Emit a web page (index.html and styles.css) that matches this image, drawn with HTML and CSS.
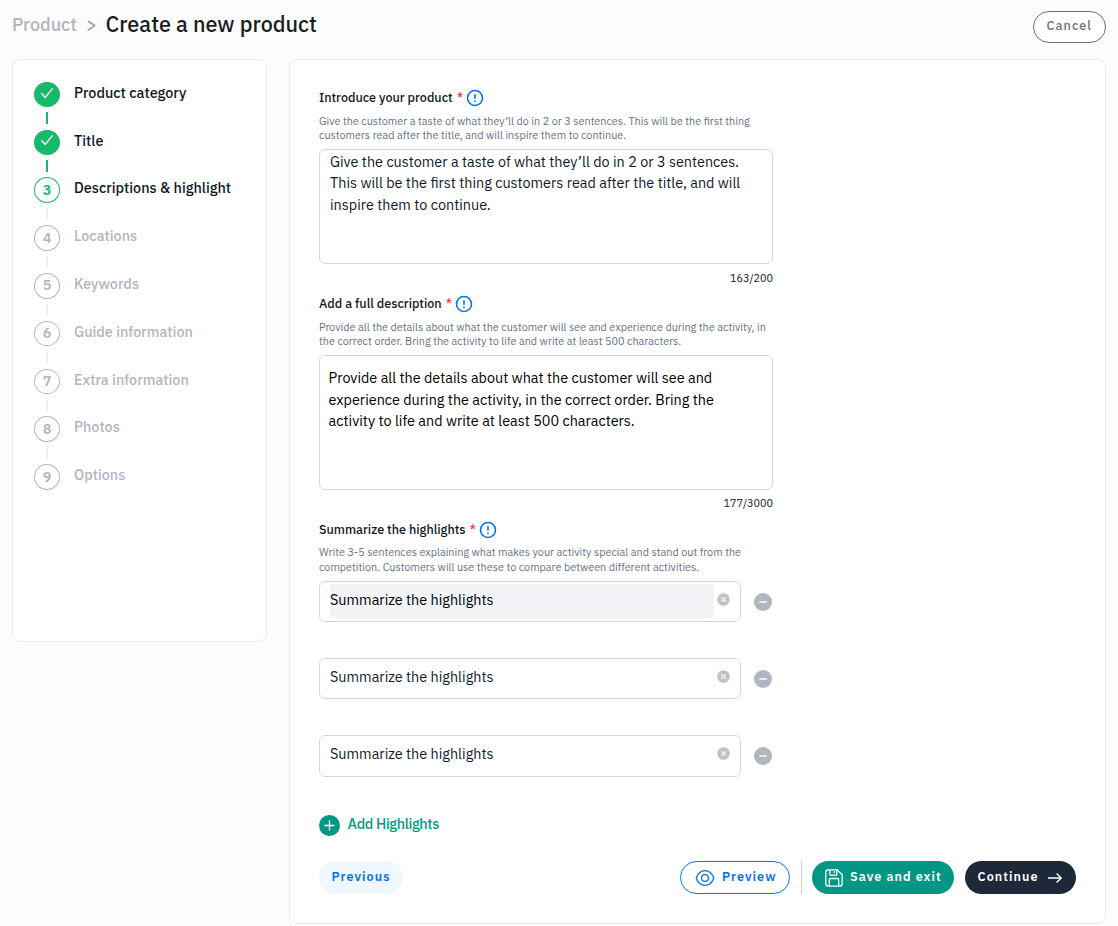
FILE: index.html
```html
<!DOCTYPE html>
<html lang="en">
<head>
<meta charset="utf-8">
<title>Create a new product</title>
<link rel="stylesheet" href="styles.css">
</head>
<body>
<header class="header">
  <nav class="crumbs"><span class="crumb">Product</span><span class="sep">&gt;</span><h1 class="title">Create a new product</h1></nav>
  <button class="btn cancel">Cancel</button>
</header>
<div class="layout">
  <aside class="card sidebar">
    <ol class="steps">
      <li class="step done"><span class="dot"><svg width="14" height="14" viewBox="0 0 14 14"><path d="M1.4 7.2 5.2 11.4 12.8 2.2"/></svg></span><span class="name">Product category</span></li>
      <li class="step done"><span class="dot"><svg width="14" height="14" viewBox="0 0 14 14"><path d="M1.4 7.2 5.2 11.4 12.8 2.2"/></svg></span><span class="name">Title</span></li>
      <li class="step current"><span class="dot">3</span><span class="name">Descriptions &amp; highlight</span></li>
      <li class="step"><span class="dot">4</span><span class="name">Locations</span></li>
      <li class="step"><span class="dot">5</span><span class="name">Keywords</span></li>
      <li class="step"><span class="dot">6</span><span class="name">Guide information</span></li>
      <li class="step"><span class="dot">7</span><span class="name">Extra information</span></li>
      <li class="step"><span class="dot">8</span><span class="name">Photos</span></li>
      <li class="step"><span class="dot">9</span><span class="name">Options</span></li>
    </ol>
  </aside>
  <main class="card form">
    <section class="field">
      <div class="label"><span class="label-text">Introduce your product</span><span class="star">*</span><svg class="info" width="18" height="18" viewBox="0 0 18 18"><circle cx="9" cy="9" r="7.5"/><path d="M9 5.2v4.6M9 11.4v1.5"/></svg></div>
      <p class="help">Give the customer a taste of what they’ll do in 2 or 3 sentences. This will be the first thing<br>customers read after the title, and will inspire them to continue.</p>
      <div class="area area-short">Give the customer a taste of what they’ll do in 2 or 3 sentences.<br>This will be the first thing customers read after the title, and will<br>inspire them to continue.</div>
      <div class="counter">163/200</div>
    </section>
    <section class="field">
      <div class="label"><span class="label-text">Add a full description</span><span class="star">*</span><svg class="info" width="18" height="18" viewBox="0 0 18 18"><circle cx="9" cy="9" r="7.5"/><path d="M9 5.2v4.6M9 11.4v1.5"/></svg></div>
      <p class="help">Provide all the details about what the customer will see and experience during the activity, in<br>the correct order. Bring the activity to life and write at least 500 characters.</p>
      <div class="area area-tall">Provide all the details about what the customer will see and<br>experience during the activity, in the correct order. Bring the<br>activity to life and write at least 500 characters.</div>
      <div class="counter">177/3000</div>
    </section>
    <section class="field">
      <div class="label"><span class="label-text">Summarize the highlights</span><span class="star">*</span><svg class="info" width="18" height="18" viewBox="0 0 18 18"><circle cx="9" cy="9" r="7.5"/><path d="M9 5.2v4.6M9 11.4v1.5"/></svg></div>
      <p class="help help-high">Write 3-5 sentences explaining what makes your activity special and stand out from the<br>competition. Customers will use these to compare between different activities.</p>
      <div class="rows">
        <div class="row">
          <div class="input"><span class="value selected">Summarize the highlights</span><svg class="clear" width="13" height="13" viewBox="0 0 12 12"><circle cx="6" cy="6" r="5.8"/><path d="m4 4 4 4m0-4-4 4"/></svg></div>
          <svg class="remove" width="18" height="18" viewBox="0 0 18 18"><circle cx="9" cy="9" r="9"/><path d="M5.2 9h7.6"/></svg>
        </div>
        <div class="row">
          <div class="input"><span class="value">Summarize the highlights</span><svg class="clear" width="13" height="13" viewBox="0 0 12 12"><circle cx="6" cy="6" r="5.8"/><path d="m4 4 4 4m0-4-4 4"/></svg></div>
          <svg class="remove" width="18" height="18" viewBox="0 0 18 18"><circle cx="9" cy="9" r="9"/><path d="M5.2 9h7.6"/></svg>
        </div>
        <div class="row">
          <div class="input input-last"><span class="value">Summarize the highlights</span><svg class="clear" width="13" height="13" viewBox="0 0 12 12"><circle cx="6" cy="6" r="5.8"/><path d="m4 4 4 4m0-4-4 4"/></svg></div>
          <svg class="remove" width="18" height="18" viewBox="0 0 18 18"><circle cx="9" cy="9" r="9"/><path d="M5.2 9h7.6"/></svg>
        </div>
      </div>
    </section>
    <div class="add"><svg width="21" height="21" viewBox="0 0 21 21"><circle cx="10.5" cy="10.5" r="10.5"/><path d="M5.5 10.5h10M10.5 5.5v10"/></svg><span class="add-text">Add Highlights</span></div>
    <footer class="actions">
      <button class="btn previous">Previous</button>
      <button class="btn preview"><svg width="20" height="18" viewBox="0 0 20 18"><path d="M1.2 9C2.9 4.300 6 1.600 10 1.600S17.100 4.300 18.800 9C17.100 13.700 14 16.400 10 16.400S2.900 13.700 1.200 9Z"/><circle cx="10" cy="9" r="3.4"/></svg><span class="text">Preview</span></button>
      <span class="divider"></span>
      <button class="btn save"><svg width="18" height="18" viewBox="0 0 18 18"><path d="M3 .8h9.200L17.200 5.800V15a2.200 2.200 0 0 1-2.200 2.200H3A2.200 2.200 0 0 1 .8 15V3A2.200 2.200 0 0 1 3 .8ZM4.800 1v4.200a1 1 0 0 0 1 1h5a1 1 0 0 0 1-1V1M9.300 2.300v1.600M4.300 17V10.500a1 1 0 0 1 1-1h7.400a1 1 0 0 1 1 1V17"/></svg><span class="text">Save and exit</span></button>
      <button class="btn continue"><span class="text">Continue</span><svg width="16" height="12" viewBox="0 0 16 12"><path d="M1 6h13M9.600 1.400 14.200 6l-4.600 4.600"/></svg></button>
    </footer>
  </main>
</div>
</body>
</html>
```
FILE: styles.css
```css
* { box-sizing: border-box; }
body { margin: 0; height: 926px; overflow: hidden; background: #fcfcfc; color: #101828; font-family: "IBM Plex Sans", Roboto, "Noto Sans", sans-serif; white-space: nowrap; }
svg { flex: none; fill: none; }
.header { height: 59px; padding: 11px 12px 0; display: flex; justify-content: space-between; align-items: flex-start; }
.crumbs { display: flex; align-items: center; height: 26px; }
.crumb { width: 74px; font-size: 18px; font-weight: 500; color: #b0b5c0; }
.sep { width: 19.500px; font-size: 18px; font-weight: 500; color: #a3a7b0; }
.title { margin: 0; font-size: 21.600px; line-height: 26px; font-weight: 500; color: #1c1c1e; }
.btn { display: flex; align-items: center; height: 33px; border: 1px solid transparent; border-radius: 17px; padding: 0 11.500px 3px; font: 600 12.600px/18px "IBM Plex Sans", Roboto, sans-serif; letter-spacing: 1.060px; }
.btn svg { margin-top: 3px; }
.cancel { width: 73px; height: 32px; padding: 0 12.500px 4px; font-weight: 500; color: #667085; background: #fff; border-color: #667085; }
.layout { display: flex; align-items: flex-start; gap: 22px; padding: 0 12px; }
.card { background: #fff; border: 1px solid #ebebeb; border-radius: 8px; }
.sidebar { width: 255px; height: 583px; padding: 21.900px 21px; }
.steps { margin: 0; padding: 0; list-style: none; }
.step { height: 47.800px; display: grid; grid-template-columns: 26px 1fr; grid-template-rows: 26px 12px; row-gap: 4.500px; column-gap: 14px; color: #b0b5c0; }
.step::after { content: ""; width: 2px; height: 12px; background: #f0f0f1; justify-self: center; }
.step:last-child::after { display: none; }
.dot { width: 26px; height: 25.500px; border: 1px solid #b0b5c0; border-radius: 50%; display: flex; align-items: center; justify-content: center; padding-bottom: 2px; font-size: 14.400px; font-weight: 600; }
.dot svg { stroke: #fff; stroke-width: 1.3; margin-top: -2px; }
.name { font-size: 14.400px; font-weight: 500; line-height: 21px; }
.done, .current { color: #101828; }
.done .dot { background: #17b86a; border-color: #17b86a; }
.done::after { background: #17b86a; }
.current .dot { color: #17b86a; border-color: #17b86a; }
.form { width: 817px; height: 865px; padding: 28px 29px; }
.field { width: 454px; }
.label { height: 20px; display: flex; align-items: center; font-size: 12.600px; font-weight: 500; }
.label-text { margin-top: -2px; }
.star { color: #f04438; margin: -2px 3px 0 4px; }
.info { stroke: #0670ee; stroke-width: 1.6; }
.help { margin: 6px 0; height: 29px; font-size: 10.800px; line-height: 14.300px; color: #667085; }
.help-high { margin: 5.250px 0 6.750px; line-height: 14.600px; }
.area { border: 1px solid #d5d6d8; border-radius: 6px; font-size: 14.400px; line-height: 21.500px; }
.area-short { height: 115px; padding: .7px 10px; }
.area-tall { height: 135px; padding: 11px 8.600px; color: #000; }
.counter { height: 30px; padding-top: 6px; text-align: right; font-size: 10.800px; line-height: 16px; }
.area-tall + .counter { padding-top: 5px; }
.rows { display: flex; flex-direction: column; gap: 36px; }
.row { display: flex; align-items: flex-start; gap: 12.500px; height: 41px; }
.input { width: 422px; height: 41px; padding: 2px 10.500px 4px 10px; border: 1px solid #d5d6d8; border-radius: 6px; display: flex; align-items: center; justify-content: space-between; font-size: 14.400px; }
.input-last { height: 42px; }
.value { width: 384px; height: 34px; line-height: 32px; }
.selected { background: #f2f3f7; color: #000; }
.clear { fill: #c2c2c2; stroke: #fff; stroke-width: 1.1; margin-top: -3px; }
.clear circle, .remove circle, .add circle { stroke: none; }
.remove { fill: #b0b5c0; stroke: #fff; stroke-width: 1.4; margin-top: 12px; }
.add { margin-top: 39px; display: flex; align-items: center; gap: 7.500px; height: 21px; color: #029785; font-size: 14.400px; font-weight: 500; letter-spacing: -.36px; }
.add-text { margin-top: -4px; }
.add svg { fill: #029785; stroke: #fff; stroke-width: 1.3; }
.actions { margin-top: 25px; display: flex; align-items: center; }
.previous { width: 84px; color: #0670ee; background: #eff8ff; margin-right: auto; }
.preview { width: 110px; color: #0670ee; background: #fff; border-color: #0670ee; gap: 7.500px; padding-left: 13.500px; }
.preview svg { stroke: #0670ee; stroke-width: 1.3; }
.divider { width: 1px; height: 33px; background: #d0d0d0; margin: 0 10px 0 11px; }
.save { width: 142px; padding-left: 12px; color: #fff; background: #029785; margin-right: 11px; gap: 7px; }
.save svg { stroke: #fff; stroke-width: 1.3; }
.continue { width: 111px; color: #fff; background: #1d2939; gap: 8.500px; }
.continue svg { stroke: #fff; stroke-width: 1.4; margin-top: 4px; }
```
